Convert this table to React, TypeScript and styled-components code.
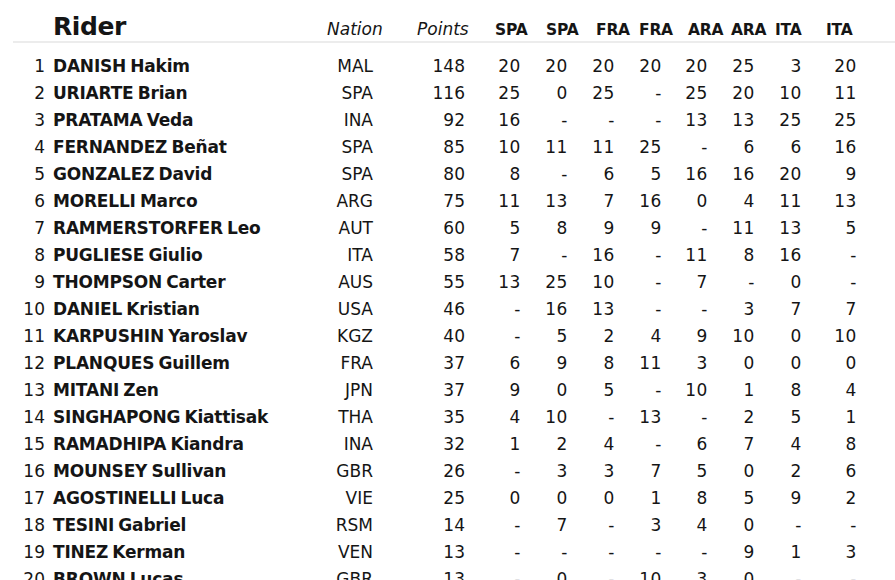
import React from 'react';
import styled, { createGlobalStyle } from 'styled-components';

type Rider = {
  pos: number;
  last: string;
  first: string;
  nation: string;
  points: number;
  races: string[];
};

const riders: Rider[] = [
  { pos: 1, last: 'DANISH', first: 'Hakim', nation: 'MAL', points: 148, races: ['20', '20', '20', '20', '20', '25', '3', '20'] },
  { pos: 2, last: 'URIARTE', first: 'Brian', nation: 'SPA', points: 116, races: ['25', '0', '25', '-', '25', '20', '10', '11'] },
  { pos: 3, last: 'PRATAMA', first: 'Veda', nation: 'INA', points: 92, races: ['16', '-', '-', '-', '13', '13', '25', '25'] },
  { pos: 4, last: 'FERNANDEZ', first: 'Beñat', nation: 'SPA', points: 85, races: ['10', '11', '11', '25', '-', '6', '6', '16'] },
  { pos: 5, last: 'GONZALEZ', first: 'David', nation: 'SPA', points: 80, races: ['8', '-', '6', '5', '16', '16', '20', '9'] },
  { pos: 6, last: 'MORELLI', first: 'Marco', nation: 'ARG', points: 75, races: ['11', '13', '7', '16', '0', '4', '11', '13'] },
  { pos: 7, last: 'RAMMERSTORFER', first: 'Leo', nation: 'AUT', points: 60, races: ['5', '8', '9', '9', '-', '11', '13', '5'] },
  { pos: 8, last: 'PUGLIESE', first: 'Giulio', nation: 'ITA', points: 58, races: ['7', '-', '16', '-', '11', '8', '16', '-'] },
  { pos: 9, last: 'THOMPSON', first: 'Carter', nation: 'AUS', points: 55, races: ['13', '25', '10', '-', '7', '-', '0', '-'] },
  { pos: 10, last: 'DANIEL', first: 'Kristian', nation: 'USA', points: 46, races: ['-', '16', '13', '-', '-', '3', '7', '7'] },
  { pos: 11, last: 'KARPUSHIN', first: 'Yaroslav', nation: 'KGZ', points: 40, races: ['-', '5', '2', '4', '9', '10', '0', '10'] },
  { pos: 12, last: 'PLANQUES', first: 'Guillem', nation: 'FRA', points: 37, races: ['6', '9', '8', '11', '3', '0', '0', '0'] },
  { pos: 13, last: 'MITANI', first: 'Zen', nation: 'JPN', points: 37, races: ['9', '0', '5', '-', '10', '1', '8', '4'] },
  { pos: 14, last: 'SINGHAPONG', first: 'Kiattisak', nation: 'THA', points: 35, races: ['4', '10', '-', '13', '-', '2', '5', '1'] },
  { pos: 15, last: 'RAMADHIPA', first: 'Kiandra', nation: 'INA', points: 32, races: ['1', '2', '4', '-', '6', '7', '4', '8'] },
  { pos: 16, last: 'MOUNSEY', first: 'Sullivan', nation: 'GBR', points: 26, races: ['-', '3', '3', '7', '5', '0', '2', '6'] },
  { pos: 17, last: 'AGOSTINELLI', first: 'Luca', nation: 'VIE', points: 25, races: ['0', '0', '0', '1', '8', '5', '9', '2'] },
  { pos: 18, last: 'TESINI', first: 'Gabriel', nation: 'RSM', points: 14, races: ['-', '7', '-', '3', '4', '0', '-', '-'] },
  { pos: 19, last: 'TINEZ', first: 'Kerman', nation: 'VEN', points: 13, races: ['-', '-', '-', '-', '-', '9', '1', '3'] },
  { pos: 20, last: 'BROWN', first: 'Lucas', nation: 'GBR', points: 13, races: ['-', '0', '-', '10', '3', '0', '-', '-'] },
];

const raceHeaders = ['SPA', 'SPA', 'FRA', 'FRA', 'ARA', 'ARA', 'ITA', 'ITA'];

const App = () => {
  return (
    <>
      <GlobalStyle />
      <Page>
        <HeaderRow>
          <RiderTitle>Rider</RiderTitle>
          <ColTitle>Nation</ColTitle>
          <ColTitle>Points</ColTitle>
          {raceHeaders.map((r, i) => (
            <RaceTitle key={i}>{r}</RaceTitle>
          ))}
        </HeaderRow>
        <Divider />
        <Rows>
          {riders.map((rider) => (
            <Row key={rider.pos}>
              <Pos>{rider.pos}</Pos>
              <Name>
                {rider.last} {rider.first}
              </Name>
              <Nation>{rider.nation}</Nation>
              <Points>{rider.points}</Points>
              {rider.races.map((v, i) => (
                <RaceCell key={i}>{v}</RaceCell>
              ))}
            </Row>
          ))}
        </Rows>
      </Page>
    </>
  );
};

export default App;

const GlobalStyle = createGlobalStyle`
  html, body {
    margin: 0;
    padding: 0;
    background: #ffffff;
    overflow: hidden;
  }
  body {
    font-family: "DejaVu Sans", Verdana, sans-serif;
    color: #151515;
  }
`;

const Page = styled.div`
  width: 895px;
  height: 580px;
  overflow: hidden;
  background: #ffffff;
`;

const HeaderRow = styled.div`
  height: 41px;
  box-sizing: border-box;
  padding: 14px 0 0 53px;
  display: grid;
  grid-template-columns: 274px 90px 78px 51px 50px 43px 49px 43px 44px 51px auto;
  align-items: baseline;
  white-space: nowrap;
`;

const RiderTitle = styled.div`
  font-size: 25px;
  font-weight: 700;
  line-height: 1;
  letter-spacing: -0.4px;
`;

const ColTitle = styled.div`
  font-size: 17px;
  font-style: italic;
  line-height: 1;
`;

const RaceTitle = styled.div`
  font-size: 15.5px;
  font-weight: 700;
  line-height: 1;
  letter-spacing: -0.2px;
`;

const Divider = styled.div`
  margin-left: 13px;
  height: 2px;
  background: #ececec;
`;

const Rows = styled.div`
  padding-top: 10px;
`;

const Row = styled.div`
  height: 27px;
  display: grid;
  grid-template-columns: 45px 255px 73px 92px 56px 47px 47px 47px 46px 47px 47px 55px;
  align-items: center;
  font-size: 17px;
  line-height: 27px;
  white-space: nowrap;
`;

const Pos = styled.div`
  text-align: right;
`;

const Name = styled.div`
  padding-left: 8px;
  font-weight: 700;
  letter-spacing: -0.2px;
  word-spacing: -1.5px;
`;

const Nation = styled.div`
  text-align: right;
`;

const Points = styled.div`
  text-align: right;
`;

const RaceCell = styled.div`
  text-align: right;
  letter-spacing: 0.6px;
`;
